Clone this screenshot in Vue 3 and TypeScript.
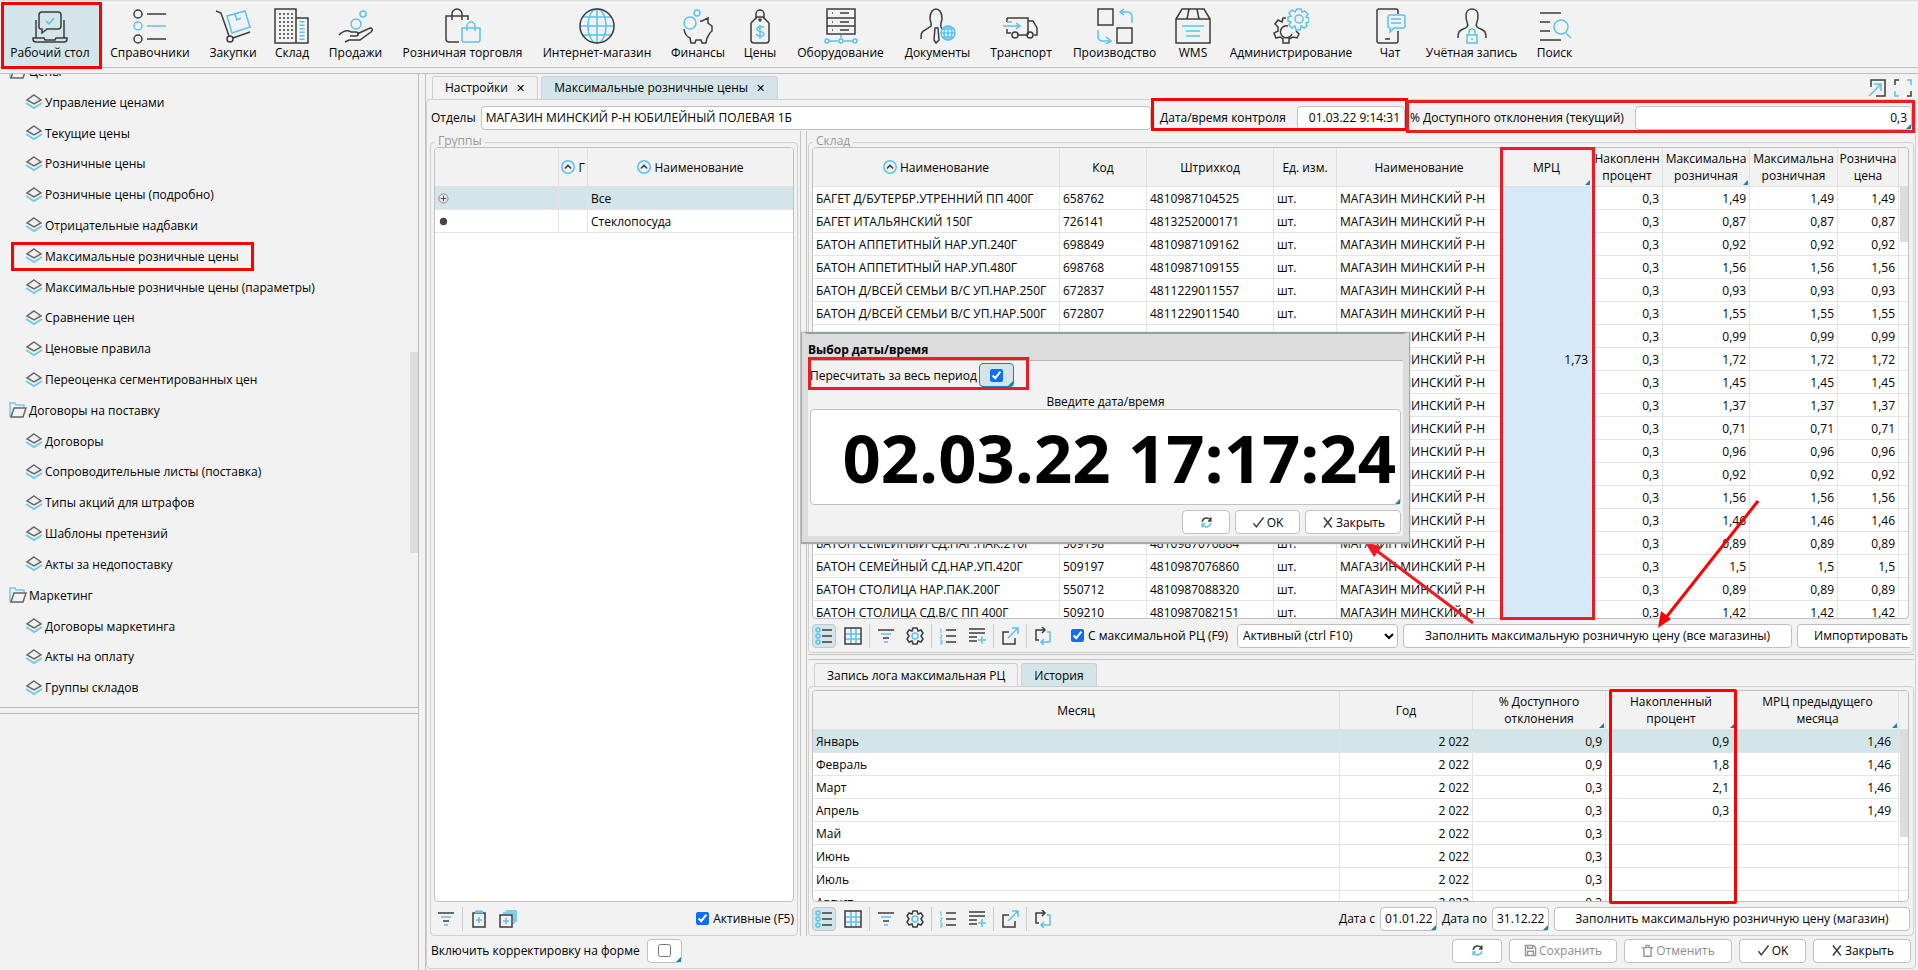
<script setup lang="ts">
import { ref } from 'vue'

const blue = (s: string): string => `<g stroke="#58c4ee">${s}</g>`

const icons: Record<string, string> = {
  desk:
    '<path d="M7 19V7a3 3 0 0 1 3-3h16a3 3 0 0 1 3 3v11a3 3 0 0 1-3 3H15l-5 4v-4H9a2 2 0 0 1-2-2"/><path d="M4 12v18M32 12v18M1 30h11l1 2h10l1-2h11v1a3 3 0 0 1-3 3H4a3 3 0 0 1-3-3z"/>' +
    blue('<path d="M14 13l3 3 5-6"/>'),
  refs:
    '<circle cx="6" cy="6" r="4"/><circle cx="6" cy="31" r="4"/><path d="M15 6h19M15 31h19"/>' +
    blue('<circle cx="6" cy="18" r="4"/><path d="M15 18h19"/>'),
  cart:
    '<path d="M1 3l5 2 8 23M18 30l17-6"/><circle cx="15" cy="31" r="3"/>' +
    blue('<path d="M12 8l18-5 5 16-18 6zM20 6l2 6 4-2"/>'),
  house:
    '<path d="M1 1h21v34H1zM22 10h12v25H22"/><path stroke-dasharray="2 2" d="M6 5v26M10 5v26M14 5v26M18 5v26"/>' +
    blue('<path stroke-width="5" stroke-dasharray="1.5 2" d="M28 13v19"/>'),
  hand:
    '<path d="M1 27c5-5 9-5 12-3h5c3 0 3 4 0 4h-6M19 26l13-6c3 0 3 2 1 4l-11 8H11l-4 2"/>' +
    blue('<circle cx="18" cy="16" r="5"/><circle cx="25" cy="6" r="3"/>'),
  bags:
    '<path d="M14 34H4a3 3 0 0 1-3-3V8h22v4M7 12V6a5 5 0 0 1 10 0v6"/>' +
    blue('<path d="M17 20h18v12a2 2 0 0 1-2 2H19a2 2 0 0 1-2-2zM22 23v-5a4 4 0 0 1 8 0v5"/>'),
  globe:
    blue('<path d="M18 1v34M1 18h34M4 9h28M4 27h28"/><ellipse cx="18" cy="18" rx="9" ry="17"/>') +
    '<circle cx="18" cy="18" r="17"/>',
  pig:
    '<path d="M4 21c1 6 3 8 6 9l1 5h4l1-3h5l1 3h4l1-5c2-3 2-5 5-7v-5l-4-3v-5l-6 3h-2"/>' +
    blue('<circle cx="10" cy="15" r="6"/><circle cx="17" cy="5" r="3"/>'),
  tag:
    '<path d="M9 15l6-6h6l6 6v17a3 3 0 0 1-3 3H12a3 3 0 0 1-3-3zM14 11V6a4 4 0 0 1 8 0v5"/><circle cx="18" cy="12" r="1"/>' +
    blue('<path d="M22 20c-1-2-7-2-7 1s7 2 7 5-6 3-8 0M18 17v14"/>'),
  server:
    '<path d="M4 1h28v9H4zM4 10h28v8H4zM4 18h28v8H4zM17 5h9M17 14h9M17 22h9M9 5h1M9 14h1M9 22h1"/>' +
    blue('<path d="M6 33h9M21 33h9M18 27v3"/><circle cx="4" cy="33" r="2"/><circle cx="18" cy="33" r="2"/><circle cx="32" cy="33" r="2"/>'),
  person:
    '<path d="M1 31c0-5 0-7 4-9l6-4c1-3-1-4-1-8 0-12 12-12 12 0 0 4-2 5-1 9l1 2M15 20h3l1 12-3 3-2-3z"/>' +
    blue('<circle cx="28" cy="25" r="7"/><path d="M28 18v14M21 25h14M22 21h12M22 29h12"/><ellipse cx="28" cy="25" rx="4" ry="7"/>'),
  truck:
    '<path d="M4 10h21v17M4 10v4M25 13h5l4 7v7h-3M4 21v4h4M15 27h9"/><circle cx="12" cy="27" r="3"/><circle cx="27" cy="27" r="3"/>' +
    blue('<path d="M0 18h16M13 15l4 3-4 3M4 14h5"/>'),
  swap:
    '<path d="M1 1h15v16H1zM20 20h15v15H20z"/>' +
    blue('<path d="M35 15V9c0-3-2-5-5-5h-6M27 1l-4 3 4 3M1 22v6c0 3 2 5 5 5h6M9 29l5 4-5 3"/>'),
  box:
    '<path d="M1 11h34v24H1zM1 11l6-10h22l6 10M14 1l-2 10M22 1l2 10"/>' + blue('<path d="M7 18h22M11 23h14M11 28h14"/>'),
  gears:
    '<path d="M13 10l-3 0-1 4-4-2-3 4 3 3v4l-4 2 2 5 4-1 3 2v4h6v-4l4-2 4 1 2-4-3-3M15 18a6 6 0 1 0 4 8"/>' +
    blue('<circle cx="26" cy="11" r="4"/><path d="M24 1h4l1 3 3-1 3 3-2 3 3 1v4l-3 1 1 3-3 2-3-2-1 4-4 0-1-4-3 2-3-3 2-3-3-1v-4l3-1-2-3 3-3 3 2z"/>'),
  chat:
    '<path d="M26 6V3a2 2 0 0 0-2-2H7a2 2 0 0 0-2 2v30a2 2 0 0 0 2 2h17a2 2 0 0 0 2-2V23M13 31h5"/>' +
    blue('<path d="M17 7h14a2 2 0 0 1 2 2v9a2 2 0 0 1-2 2h-9l-4 4v-4a2 2 0 0 1-2-2V9zM19 11h10M19 15h10"/>'),
  user:
    '<path d="M4 30c0-6 1-7 5-9 4-1 6-3 4-7-1-2-1-4-1-7 0-8 12-8 12 0 0 3 0 5-1 7-2 4 0 6 4 7 4 2 5 3 5 9"/>' +
    blue('<path d="M13 27h10v8H13zM15 27v-3a3 3 0 0 1 6 0v3M18 30v2"/>'),
  search: '<path d="M3 5h21M3 14h10M3 23h10M3 32h21"/>' + blue('<circle cx="24" cy="19" r="7"/><path d="M29 25l5 5"/>'),

  list:
    '<path d="M7 3h10M7 9h10M7 15h10"/>' + blue('<circle cx="3" cy="3" r="2"/><circle cx="3" cy="9" r="2"/><circle cx="3" cy="15" r="2"/>'),
  grid: blue('<path d="M7 1v16M12 1v16M1 7h16M1 12h16"/>') + '<path d="M1 1h16v16H1z"/>',
  filter: '<path d="M1 3h16M6 11h6"/>' + blue('<path d="M4 7h10M7 15h4"/>'),
  gear:
    '<path d="M7 1h4l1 3 3-1 2 3-2 3 2 3-2 3-3-1-1 3H7l-1-3-3 1-2-3 2-3-2-3 2-3 3 1z"/>' + blue('<circle cx="9" cy="9" r="3"/>'),
  numbers: '<path d="M7 3h10M7 9h10M7 15h10"/>' + blue('<path stroke-width="1" d="M1 2h1v4M1 8h2v1l-2 2h2M1 13h2v4H1M1 15h2"/>'),
  sum: '<path d="M1 2h16M1 6h16M1 10h8M1 14h8"/>' + blue('<path d="M14 9v8M10 13h8"/>'),
  export: '<path d="M8 5H2v12h12v-6"/>' + blue('<path d="M7 11l10-10M11 1h6v6"/>'),
  reload: '<path d="M5 13H2V3h9M8 0l3 3-3 3"/>' + blue('<path d="M13 5h3v10H7M10 12l-3 3 3 3"/>'),
  clip: '<path d="M3 3h12v14H3z"/>' + blue('<path stroke-width="3" d="M5 2h8"/><path d="M9 7v6M6 10h6"/>'),
  clips: '<path d="M1 5h12v12H1z"/>' + blue('<path d="M4 3h11v11M7 1h10v11M7 8v6M4 11h6"/>'),
  open: '<path d="M3 8V1h14v16H8"/>' + blue('<path d="M1 17L13 5M6 5h7v7"/>'),
  full: '<path d="M1 6V1h4M17 12v5h-4"/>' + blue('<path d="M13 1h4v5M5 17H1v-5"/>'),
  cycle: '<path stroke-width="2" d="M3 8c1-6 9-7 12-2M15 2v5h-4"/>' + blue('<path stroke-width="2" d="M15 10c-1 6-9 7-12 2M3 16v-5h4"/>'),
  check: '<path stroke-width="2" d="M2 10l4 5L16 2"/>',
  cross: '<path stroke-width="2" d="M4 2l11 14M15 2L4 16"/>',
  save: '<path stroke-width="2" d="M2 2h11l3 3v11H2zM5 2v4h7V2M5 16v-6h8v6"/>',
  trash: '<path stroke-width="2" d="M1 5h16M4 5v12h10V5M7 5V2h4v3"/>',
  up: blue('<circle cx="9" cy="9" r="8" stroke-width="2"/>') + '<path stroke-width="2" d="M5 11l4-4 4 4"/>',
}

const nav = [
  { t: 'Рабочий стол', i: 'desk', w: 'w100' },
  { t: 'Справочники', i: 'refs', w: 'w100' },
  { t: 'Закупки', i: 'cart', w: 'w66' },
  { t: 'Склад', i: 'house', w: 'w53' },
  { t: 'Продажи', i: 'hand', w: 'w74' },
  { t: 'Розничная торговля', i: 'bags', w: 'w140' },
  { t: 'Интернет-магазин', i: 'globe', w: 'w130' },
  { t: 'Финансы', i: 'pig', w: 'w71' },
  { t: 'Цены', i: 'tag', w: 'w53' },
  { t: 'Оборудование', i: 'server', w: 'w108' },
  { t: 'Документы', i: 'person', w: 'w86' },
  { t: 'Транспорт', i: 'truck', w: 'w82' },
  { t: 'Производство', i: 'swap', w: 'w104' },
  { t: 'WMS', i: 'box', w: 'w53' },
  { t: 'Администрирование', i: 'gears', w: 'w144' },
  { t: 'Чат', i: 'chat', w: 'w54' },
  { t: 'Учётная запись', i: 'user', w: 'w108' },
  { t: 'Поиск', i: 'search', w: 'w60' },
]

interface TreeItem { t: string; folder?: boolean; marked?: boolean }
const tree: TreeItem[] = [
  { t: 'Цены', folder: true },
  { t: 'Управление ценами' },
  { t: 'Текущие цены' },
  { t: 'Розничные цены' },
  { t: 'Розничные цены (подробно)' },
  { t: 'Отрицательные надбавки' },
  { t: 'Максимальные розничные цены', marked: true },
  { t: 'Максимальные розничные цены (параметры)' },
  { t: 'Сравнение цен' },
  { t: 'Ценовые правила' },
  { t: 'Переоценка сегментированных цен' },
  { t: 'Договоры на поставку', folder: true },
  { t: 'Договоры' },
  { t: 'Сопроводительные листы (поставка)' },
  { t: 'Типы акций для штрафов' },
  { t: 'Шаблоны претензий' },
  { t: 'Акты за недопоставку' },
  { t: 'Маркетинг', folder: true },
  { t: 'Договоры маркетинга' },
  { t: 'Акты на оплату' },
  { t: 'Группы складов' },
]

const goods: [string, string, string, string][] = [
  ['БАГЕТ Д/БУТЕРБР.УТРЕННИЙ ПП 400Г', '658762', '4810987104525', '1,49'],
  ['БАГЕТ ИТАЛЬЯНСКИЙ 150Г', '726141', '4813252000171', '0,87'],
  ['БАТОН АППЕТИТНЫЙ НАР.УП.240Г', '698849', '4810987109162', '0,92'],
  ['БАТОН АППЕТИТНЫЙ НАР.УП.480Г', '698768', '4810987109155', '1,56'],
  ['БАТОН Д/ВСЕЙ СЕМЬИ В/С УП.НАР.250Г', '672837', '4811229011557', '0,93'],
  ['БАТОН Д/ВСЕЙ СЕМЬИ В/С УП.НАР.500Г', '672807', '4811229011540', '1,55'],
  ['', '', '', '0,99'],
  ['', '', '', '1,72'],
  ['', '', '', '1,45'],
  ['', '', '', '1,37'],
  ['', '', '', '0,71'],
  ['', '', '', '0,96'],
  ['', '', '', '0,92'],
  ['', '', '', '1,56'],
  ['', '', '', '1,46'],
  ['БАТОН СЕМЕЙНЫЙ СД.НАР.ПАК.210Г', '509198', '4810987076884', '0,89'],
  ['БАТОН СЕМЕЙНЫЙ СД.НАР.УП.420Г', '509197', '4810987076860', '1,5'],
  ['БАТОН СТОЛИЦА НАР.ПАК.200Г', '550712', '4810987088320', '0,89'],
  ['БАТОН СТОЛИЦА СД.В/С ПП 400Г', '509210', '4810987082151', '1,42'],
]

const history: [string, string, string, string][] = [
  ['Январь', '0,9', '0,9', '1,46'],
  ['Февраль', '0,9', '1,8', '1,46'],
  ['Март', '0,3', '2,1', '1,46'],
  ['Апрель', '0,3', '0,3', '1,49'],
  ['Май', '0,3', '', ''],
  ['Июнь', '0,3', '', ''],
  ['Июль', '0,3', '', ''],
  ['Август', '0,3', '', ''],
]

const tools: string[][] = [['list', 'grid'], ['filter', 'gear'], ['numbers', 'sum'], ['export'], ['reload']]

const recalc = ref(true)
const onlyMax = ref(true)
const onlyActive = ref(true)
const adjust = ref(false)
</script>

<template>
  <div class="page">
    <nav class="nav">
      <button v-for="(n, k) in nav" :key="n.t" class="nav-item" :class="[n.w, { current: k === 0 }]">
        <svg class="nav-icon" viewBox="0 0 36 36" v-html="icons[n.i]" />
        <span>{{ n.t }}</span>
      </button>
    </nav>

    <div class="work">
      <aside class="side">
        <div class="side-top">
          <ul class="tree">
            <li v-for="t in tree" :key="t.t" :class="{ folder: t.folder }">
              <a href="#" :class="{ marked: t.marked }">
                <svg v-if="t.folder" class="tree-icon" viewBox="0 0 18 16">
                  <path d="M3 14H1V1h5l1 2h8v2" stroke="#6fccee" />
                  <path d="M5 6h12l-3 9H2z" />
                </svg>
                <svg v-else class="tree-icon" viewBox="0 0 18 16">
                  <path d="M1 9l8 5 8-5" stroke="#6fccee" stroke-width="2" />
                  <path d="M9 1l7 5-7 4-7-4z" />
                </svg>
                {{ t.t }}
              </a>
            </li>
          </ul>
          <i class="thumb side-thumb" />
        </div>
        <div class="side-bottom" />
      </aside>

      <main class="main">
        <div class="tabs">
          <button class="tab">Настройки <b>✕</b></button>
          <button class="tab on">Максимальные розничные цены <b>✕</b></button>
          <span class="grow" />
          <button class="plain" aria-label="Открыть"><svg class="ic" viewBox="0 0 18 18" v-html="icons.open" /></button>
          <button class="plain" aria-label="Во весь экран"><svg class="ic" viewBox="0 0 18 18" v-html="icons.full" /></button>
        </div>

        <div class="panel">
          <div class="head">
            <label for="dep">Отделы</label>
            <input id="dep" class="grow" value="МАГАЗИН МИНСКИЙ Р-Н ЮБИЛЕЙНЫЙ ПОЛЕВАЯ 1Б" />
            <div class="frame frame-date">
              <label for="ctl">Дата/время контроля</label>
              <input id="ctl" class="num" value="01.03.22 9:14:31" />
            </div>
            <div class="frame frame-dev">
              <label for="dev">% Доступного отклонения (текущий)</label>
              <span class="edit grow"><input id="dev" class="num" value="0,3" /></span>
            </div>
          </div>

          <div class="body">
            <section class="set groups">
              <h2>Группы</h2>
              <div class="box">
                <table>
                  <colgroup><col class="c124" /><col class="c29" /><col /></colgroup>
                  <thead>
                    <tr>
                      <th />
                      <th><svg class="sort" viewBox="0 0 18 18" v-html="icons.up" />Г</th>
                      <th><svg class="sort" viewBox="0 0 18 18" v-html="icons.up" />Наименование</th>
                    </tr>
                  </thead>
                  <tbody>
                    <tr class="sel">
                      <td>
                        <svg class="dot" viewBox="0 0 12 12"><circle cx="6" cy="6" r="5" fill="#e4e4e4" stroke="#888" /><path d="M3 6h6M6 3v6" stroke="#444" /></svg>
                      </td>
                      <td /><td>Все</td>
                    </tr>
                    <tr>
                      <td>
                        <svg class="dot" viewBox="0 0 12 12"><circle cx="6" cy="6" r="4" fill="#444" stroke="none" /></svg>
                      </td>
                      <td /><td>Стеклопосуда</td>
                    </tr>
                  </tbody>
                </table>
              </div>
              <div class="bar">
                <button class="tool" aria-label="Фильтр"><svg class="ic" viewBox="0 0 18 18" v-html="icons.filter" /></button>
                <i class="sep" />
                <button class="tool" aria-label="Добавить"><svg class="ic" viewBox="0 0 18 18" v-html="icons.clip" /></button>
                <button class="tool" aria-label="Добавить все"><svg class="ic" viewBox="0 0 18 18" v-html="icons.clips" /></button>
                <span class="grow" />
                <label class="tick"><input v-model="onlyActive" type="checkbox" />Активные (F5)</label>
              </div>
            </section>

            <i class="split-v" />

            <div class="right">
              <section class="set store">
                <h2>Склад</h2>
                <div class="box">
                  <table>
                    <colgroup>
                      <col /><col class="c87" /><col class="c128" /><col class="c63" /><col class="c165" /><col class="c90" />
                      <col class="c71" /><col class="c87" /><col class="c88" /><col class="c62" /><col class="c9" />
                    </colgroup>
                    <thead>
                      <tr>
                        <th><svg class="sort" viewBox="0 0 18 18" v-html="icons.up" />Наименование</th>
                        <th>Код</th>
                        <th>Штрихкод</th>
                        <th>Ед. изм.</th>
                        <th>Наименование</th>
                        <th class="mark">МРЦ</th>
                        <th>Накопленн<br />процент</th>
                        <th class="mark">Максимальна<br />розничная</th>
                        <th>Максимальна<br />розничная</th>
                        <th>Рознична<br />цена</th>
                        <th />
                      </tr>
                    </thead>
                    <tbody>
                      <tr v-for="(g, k) in goods" :key="k">
                        <td>{{ g[0] }}</td>
                        <td>{{ g[1] }}</td>
                        <td>{{ g[2] }}</td>
                        <td>{{ g[0] ? 'шт.' : '' }}</td>
                        <td>МАГАЗИН МИНСКИЙ Р-Н</td>
                        <td class="r mrc">{{ k === 7 ? '1,73' : '' }}</td>
                        <td class="r">0,3</td>
                        <td class="r">{{ g[3] }}</td>
                        <td class="r">{{ g[3] }}</td>
                        <td class="r">{{ g[3] }}</td>
                        <td class="track" />
                      </tr>
                    </tbody>
                  </table>
                  <i class="thumb store-thumb" />
                </div>
                <i class="note-box note-mrc" />
                <div class="bar">
                  <template v-for="(grp, k) in tools" :key="k">
                    <i v-if="k" class="sep" />
                    <button v-for="t in grp" :key="t" class="tool" :class="{ on: t === 'list' }" :aria-label="t">
                      <svg class="ic" viewBox="0 0 18 18" v-html="icons[t]" />
                    </button>
                  </template>
                  <label class="tick tick-max"><input v-model="onlyMax" type="checkbox" />С максимальной РЦ (F9)</label>
                  <select aria-label="Активность"><option>Активный (ctrl F10)</option></select>
                  <button class="btn fill-all">Заполнить максимальную розничную цену (все магазины)</button>
                  <button class="btn import">Импортировать</button>
                </div>
                <svg class="arrows" viewBox="0 0 400 150">
                  <g stroke="#ed1c24" fill="#ed1c24">
                    <path d="M114 133L10 55" stroke-width="3" />
                    <path d="M5 51l18 6-8 10z" stroke="none" />
                  </g>
                  <g stroke="#f00" fill="#f00">
                    <path d="M399 11L305 130" stroke-width="3" />
                    <path d="M299 138l3-17 10 8z" stroke="none" />
                  </g>
                </svg>
              </section>

              <i class="split-h" />

              <div class="tabs sub">
                <button class="tab">Запись лога максимальная РЦ</button>
                <button class="tab on">История</button>
              </div>
              <section class="set log">
                <div class="box">
                  <table>
                    <colgroup><col /><col class="c133" /><col class="c133" /><col class="c131" /><col class="c162" /><col class="c9" /></colgroup>
                    <thead>
                      <tr>
                        <th>Месяц</th>
                        <th>Год</th>
                        <th class="mark">% Доступного<br />отклонения</th>
                        <th class="mark">Накопленный<br />процент</th>
                        <th class="mark">МРЦ предыдущего<br />месяца</th>
                        <th />
                      </tr>
                    </thead>
                    <tbody>
                      <tr v-for="(h, k) in history" :key="h[0]" :class="{ sel: k === 0 }">
                        <td>{{ h[0] }}</td>
                        <td class="r">2 022</td>
                        <td class="r">{{ h[1] }}</td>
                        <td class="r wide">{{ h[2] }}</td>
                        <td class="r wide">{{ h[3] }}</td>
                        <td class="track" />
                      </tr>
                    </tbody>
                  </table>
                  <i class="thumb log-thumb" />
                </div>
                <i class="note-box note-log" />
                <div class="bar">
                  <template v-for="(grp, k) in tools" :key="k">
                    <i v-if="k" class="sep" />
                    <button v-for="t in grp" :key="t" class="tool" :class="{ on: t === 'list' }" :aria-label="t">
                      <svg class="ic" viewBox="0 0 18 18" v-html="icons[t]" />
                    </button>
                  </template>
                  <span class="grow" />
                  <label for="from">Дата с</label>
                  <span class="edit short"><input id="from" class="num" value="01.01.22" /></span>
                  <label for="to">Дата по</label>
                  <span class="edit short"><input id="to" class="num" value="31.12.22" /></span>
                  <button class="btn fill-one">Заполнить максимальную розничную цену (магазин)</button>
                </div>
              </section>
            </div>
          </div>

          <div class="foot">
            <label for="adj">Включить корректировку на форме</label>
            <span class="edit check"><input id="adj" v-model="adjust" type="checkbox" /></span>
            <span class="grow" />
            <button class="btn b50" aria-label="Обновить"><svg class="bi" viewBox="0 0 18 18" v-html="icons.cycle" /></button>
            <button class="btn b108" disabled><svg class="bi" viewBox="0 0 18 18" v-html="icons.save" />Сохранить</button>
            <button class="btn b108" disabled><svg class="bi" viewBox="0 0 18 18" v-html="icons.trash" />Отменить</button>
            <button class="btn b67"><svg class="bi" viewBox="0 0 18 18" v-html="icons.check" />OK</button>
            <button class="btn b98"><svg class="bi" viewBox="0 0 18 18" v-html="icons.cross" />Закрыть</button>
          </div>
        </div>
      </main>
    </div>

    <div class="dialog" role="dialog" aria-labelledby="dlg">
      <h1 id="dlg">Выбор даты/время</h1>
      <div class="dialog-body">
        <div class="dialog-check">
          <label for="rec">Пересчитать за весь период</label>
          <span class="edit check lit"><input id="rec" v-model="recalc" type="checkbox" /></span>
        </div>
        <label class="ask" for="moment">Введите дата/время</label>
        <span class="edit"><input id="moment" class="moment" value="02.03.22 17:17:24" /></span>
        <div class="dialog-foot">
          <button class="btn b48" aria-label="Обновить"><svg class="bi" viewBox="0 0 18 18" v-html="icons.cycle" /></button>
          <button class="btn b66"><svg class="bi" viewBox="0 0 18 18" v-html="icons.check" />OK</button>
          <button class="btn b96"><svg class="bi" viewBox="0 0 18 18" v-html="icons.cross" />Закрыть</button>
        </div>
      </div>
    </div>
  </div>
</template>

<style>
body {
  margin: 0;
  background: #f2f2f2;
}
</style>

<style scoped>
* {
  box-sizing: border-box;
}
.page {
  position: relative;
  display: flex;
  flex-direction: column;
  height: 100vh;
  overflow: hidden;
  background: #f2f2f2;
  color: #000;
  font: 12px/17px 'Open Sans', 'Noto Sans', sans-serif;
}
button,
input,
select {
  font: inherit;
  color: inherit;
  margin: 0;
}
button {
  background: none;
  border: 0;
  padding: 0;
  white-space: nowrap;
}
svg {
  fill: none;
  stroke: #3c3c3c;
  stroke-width: 1.5;
  flex: none;
}
label {
  white-space: nowrap;
}
.grow {
  flex: 1;
  min-width: 0;
}

.nav {
  display: flex;
  flex: none;
  height: 68px;
  border-top: 1px solid #dcdcdc;
  border-bottom: 1px solid #c0c0c0;
}
.nav-item {
  display: flex;
  flex-direction: column;
  align-items: center;
  padding-top: 7px;
  flex: none;
}
.nav-icon {
  width: 36px;
  height: 36px;
}
.nav-item.current {
  position: relative;
  z-index: 1;
  background: #d3e5e9;
  outline: 3px solid #f00;
  outline-offset: -3px;
  margin: 1px -2px -2px 1px;
  padding: 6px 3px 0 0;
}
.w53 { width: 52px; }
.w54 { width: 54px; }
.w60 { width: 57px; }
.w66 { width: 66px; }
.w71 { width: 72px; }
.w74 { width: 75px; }
.w82 { width: 82px; }
.w86 { width: 85px; }
.w100 { width: 100px; }
.nav-item.current.w100 { width: 101px; }
.w104 { width: 105px; }
.w108 { width: 109px; }
.w130 { width: 130px; }
.w140 { width: 139px; }
.w144 { width: 144px; }

.work {
  display: flex;
  flex: 1;
  min-height: 0;
  margin-top: 5px;
  border-top: 1px solid #c0c0c0;
}
.side {
  display: flex;
  flex-direction: column;
  flex: none;
  width: 419px;
  border-right: 1px solid #bcbcbc;
}
.side-top {
  position: relative;
  display: flex;
  flex: none;
  height: 634px;
  overflow: hidden;
  border-bottom: 1px solid #bcbcbc;
}
.side-bottom {
  flex: 1;
  margin-top: 5px;
  border-top: 1px solid #bcbcbc;
}
.tree {
  display: flex;
  flex: 1;
  flex-direction: column;
  list-style: none;
  margin: -18px 0 4px;
  padding: 0;
}
.tree li {
  display: flex;
  flex: 1;
  align-items: center;
  padding-left: 25px;
}
.tree li.folder {
  padding-left: 9px;
}
.tree a {
  display: flex;
  align-items: center;
  gap: 2px;
  color: inherit;
  text-decoration: none;
}
.tree a.marked {
  outline: 3px solid #f00;
  margin-left: -11px;
  padding: 3px 12px 3px 11px;
}
.tree-icon {
  width: 18px;
  height: 16px;
  stroke: #666;
}
.thumb {
  position: absolute;
  right: 0;
  width: 8px;
  background: #dcdcdc;
}
.side-thumb {
  top: 278px;
  height: 201px;
}

.main {
  display: flex;
  flex: 1;
  flex-direction: column;
  min-width: 0;
  margin-left: 6px;
  padding: 0 2px 1px 0;
  border-left: 1px solid #c0c0c0;
}
.tabs {
  display: flex;
  flex: none;
  gap: 3px;
  padding: 2px 4px 0 6px;
}
.tab {
  height: 23px;
  padding: 0 12px;
  border: 1px solid #d0d0d0;
  border-bottom: 0;
  border-radius: 3px 3px 0 0;
}
.tab.on {
  background: #d3e5e9;
}
.tab b {
  margin-left: 5px;
  font-family: 'DejaVu Sans', sans-serif;
  font-size: 11px;
}
.plain {
  margin-left: 5px;
}
.ic {
  display: block;
  width: 18px;
  height: 18px;
}
.panel {
  display: flex;
  flex: 1;
  flex-direction: column;
  min-height: 0;
  border: 1px solid #cfcfcf;
  border-radius: 4px;
}
.head {
  display: flex;
  flex: none;
  align-items: center;
  height: 31px;
  padding: 4px 0 0 4px;
  gap: 5px;
}
input:not([type='checkbox']),
select,
.btn {
  height: 24px;
  border: 1px solid #c0c0c0;
  border-radius: 4px;
  background: #fff;
}
input:not([type='checkbox']) {
  padding: 0 4px;
  width: 100%;
}
.num {
  text-align: right;
}
.frame {
  display: flex;
  align-items: center;
  gap: 11px;
  outline-offset: -3px;
  height: 33px;
}
.frame-date {
  width: 257px;
  margin: 0 0 6px -5px;
  padding: 6px 3px 0 9px;
  outline: 3px solid #f00;
}
.frame-dev {
  position: relative;
  width: 509px;
  margin: 0 0 2px -7px;
  padding: 2px 3px 0 4px;
  outline: 3px solid #ed1c24;
}
.frame-date input {
  flex: 1;
  min-width: 0;
}
.edit {
  position: relative;
  display: flex;
}
.edit::after,
.mark::after {
  content: '';
  position: absolute;
  right: 1px;
  bottom: 1px;
  width: 0;
  height: 0;
  border-left: 5px solid transparent;
  border-bottom: 5px solid #0d86b4;
}

.body {
  display: flex;
  flex: 1;
  min-height: 0;
}
.set {
  position: relative;
  display: flex;
  flex-direction: column;
  min-height: 0;
  border: 1px solid #cfcfcf;
  border-radius: 4px;
  padding: 4px 3px 0;
}
.set h2 {
  position: absolute;
  left: 4px;
  top: -11px;
  margin: 0;
  padding: 0 3px;
  background: #f2f2f2;
  color: #999;
  font: inherit;
  line-height: 18px;
}
.groups {
  flex: none;
  width: 368px;
  margin: 11px 0 0 3px;
}
.split-v {
  flex: none;
  width: 7px;
  margin: 0 1px 0 2px;
  border: solid #c4c4c4;
  border-width: 0 1px;
}
.right {
  display: flex;
  flex: 1;
  flex-direction: column;
  min-width: 0;
  padding-right: 1px;
}
.box {
  position: relative;
  flex: 1;
  min-height: 0;
  overflow: hidden;
  border: 1px solid #c0c0c0;
  border-radius: 4px;
  background: #fff;
}
.store .box,
.log .box {
  margin-right: 1px;
}
.store {
  flex: none;
  height: 511px;
  margin-top: 11px;
}
.log {
  flex: 1;
  padding-top: 3px;
}
.split-h {
  flex: none;
  height: 6px;
  margin-top: 1px;
  border: solid #c4c4c4;
  border-width: 1px 0;
}
.sub {
  padding-top: 3px;
}

table {
  width: 100%;
  table-layout: fixed;
  border-collapse: separate;
  border-spacing: 0;
}
th {
  position: relative;
  height: 39px;
  padding: 0;
  overflow: hidden;
  background: #f2f2f2;
  border: solid #e0e0e0;
  border-width: 0 1px 1px 0;
  font-weight: 400;
  white-space: nowrap;
}
td {
  height: 23px;
  padding: 0 0 0 3px;
  overflow: hidden;
  border: solid #e4e4e4;
  border-width: 0 1px 1px 0;
  white-space: nowrap;
}
td.r {
  padding: 0 3px 0 0;
  text-align: right;
}
td.wide {
  padding-right: 7px;
}
td.mrc {
  background: #d6e9f8;
  border-color: #d6e9f8;
}
td.track,
th:last-child,
td:last-child {
  border-right: 0;
}
.sel td {
  background: #d3e5e9;
}
.sort {
  width: 14px;
  height: 14px;
  margin-right: 3px;
  vertical-align: -2px;
}
.dot {
  display: block;
  width: 11px;
  height: 11px;
  stroke-width: 1;
}
.c9 { width: 9px; }
.c29 { width: 29px; }
.c62 { width: 61px; }
.c63 { width: 63px; }
.c71 { width: 71px; }
.c87 { width: 87px; }
.c88 { width: 88px; }
.c90 { width: 90px; }
.c124 { width: 124px; }
.c128 { width: 127px; }
.c131 { width: 131px; }
.c133 { width: 133px; }
.c162 { width: 162px; }
.c165 { width: 165px; }
.store-thumb {
  top: 39px;
  height: 55px;
}
.log-thumb {
  top: 39px;
  height: 107px;
}
.note-box {
  position: absolute;
  border: 3px solid #ed1c24;
}
.note-mrc {
  top: 4px;
  right: 318px;
  bottom: 32px;
  width: 95px;
}
.note-log {
  top: 2px;
  right: 176px;
  bottom: 31px;
  width: 128px;
  border-color: #f00;
  border-radius: 2px;
}
.arrows {
  position: absolute;
  right: 154px;
  bottom: 12px;
  width: 400px;
  height: 150px;
}

.bar {
  display: flex;
  flex: none;
  align-items: center;
  height: 33px;
  gap: 5px;
}
.tool {
  display: flex;
  align-items: center;
  justify-content: center;
  width: 24px;
  height: 24px;
  border: 1px solid transparent;
  border-radius: 4px;
}
.tool.on {
  background: #d3e5e9;
  border-color: #bcc8cb;
}
.sep {
  width: 1px;
  height: 24px;
  margin: 0 -1px;
  background: #cdcdcd;
}
.tick {
  display: flex;
  align-items: center;
  gap: 4px;
}
.tick-max {
  margin: 0 4px 0 11px;
}
input[type='checkbox'] {
  width: 13px;
  height: 13px;
  margin: 0;
  accent-color: #0d6efd;
}
select {
  width: 161px;
  padding: 0 2px 0 1px;
}
.btn {
  display: inline-flex;
  align-items: center;
  justify-content: center;
  flex: none;
  gap: 2px;
}
.btn:disabled {
  color: #8c8c8c;
}
.btn:disabled svg {
  stroke: #999;
}
.bi {
  width: 13px;
  height: 13px;
}
.fill-all { width: 389px; }
.fill-one { width: 356px; }
.import {
  flex: 1;
  min-width: 0;
  overflow: hidden;
  justify-content: flex-start;
  padding-left: 16px;
  border-right: 0;
  border-radius: 4px 0 0 4px;
}
.edit.short { width: 57px; }
.foot {
  display: flex;
  flex: none;
  align-items: center;
  height: 32px;
  padding: 0 4px 3px;
  gap: 7px;
}
.check {
  align-items: center;
  justify-content: center;
  width: 35px;
  height: 24px;
  border: 1px solid #c0c0c0;
  border-radius: 4px;
  background: #fff;
}
.check::after {
  right: 0;
  bottom: 0;
}
.check.lit {
  border-color: #0d86b4;
  background: #d3e5e9;
}
.b48 { width: 48px; }
.b50 { width: 50px; }
.b66 { width: 65px; }
.b67 { width: 67px; }
.b96 { width: 96px; }
.b98 { width: 98px; }
.b108 { width: 108px; }

.dialog {
  position: absolute;
  left: 802px;
  top: 332px;
  width: 607px;
  border: 6px solid #dcdcdc;
  border-top: 2px solid #93a0a3;
  background: #dcdcdc;
  box-shadow: 0 1px 1px 1px #a8a8a8;
}
.dialog h1 {
  margin: 0;
  padding: 7px 0 2px;
  font: bold 12px/17px 'Open Sans', 'Noto Sans', sans-serif;
}
.dialog-body {
  display: flex;
  flex-direction: column;
  padding: 0 2px 2px;
  border-top: 1px solid #b8b8b8;
  background: #f2f2f2;
}
.dialog-check {
  display: flex;
  align-items: center;
  gap: 2px;
  width: 221px;
  height: 33px;
  margin: -4px 0 4px -2px;
  padding: 3px 0 0 2px;
  outline: 3px solid #ed1c24;
  outline-offset: -3px;
}
.ask {
  line-height: 15px;
  text-align: center;
}
.dialog input.moment {
  height: 96px;
  padding: 0 4px;
  text-align: right;
  font-size: 67px;
  font-weight: 700;
}
.dialog-foot {
  display: flex;
  justify-content: flex-end;
  gap: 5px;
  margin-top: 5px;
}
</style>
